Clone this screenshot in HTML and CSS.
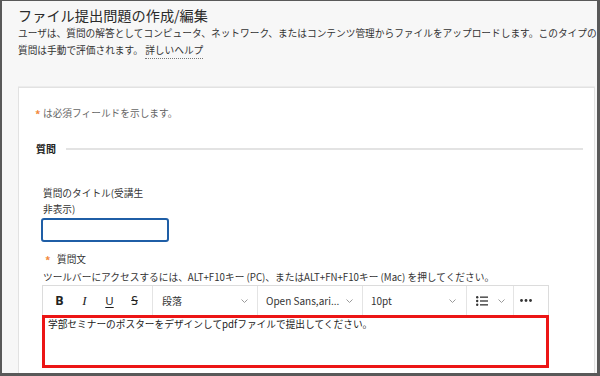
FILE: index.html
```html
<!DOCTYPE html>
<html lang="ja">
<head>
<meta charset="utf-8">
<link rel="stylesheet" href="styles.css">
</head>
<body>
<div class="frame">
  <header class="head">
    <h1 class="title">ファイル提出問題の作成/編集</h1>
    <p class="desc">ユーザは、質問の解答としてコンピュータ、ネットワーク、またはコンテンツ管理からファイルをアップロードします。このタイプの<br>質問は手動で評価されます。 <a class="help">詳しいヘルプ</a></p>
  </header>
  <section class="card">
    <p class="req"><span class="star">*</span>は必須フィールドを示します。</p>
    <div class="legend"><span class="legend-text">質問</span><span class="rule"></span></div>
    <div class="field">
      <label class="lbl">質問のタイトル(受講生<br>非表示)</label>
      <div class="input"></div>
    </div>
    <div class="qlabel"><span class="star star2">*</span>質問文</div>
    <p class="hint">ツールバーにアクセスするには、ALT+F10キー (PC)、またはALT+FN+F10キー (Mac) を押してください。</p>
    <div class="editor">
      <div class="toolbar">
        <div class="grp fmt">
          <span class="btn b-bold">B</span>
          <span class="btn b-ital">I</span>
          <span class="btn b-under">U</span>
          <span class="btn b-strike">S</span>
        </div>
        <div class="grp dd dd1"><span>段落</span><svg class="chev" width="7" height="4" viewBox="0 0 7 4"><polyline points="0.5,0.5 3.5,3.5 6.5,0.5"/></svg></div>
        <div class="grp dd dd2"><span>Open Sans,ari...</span><svg class="chev" width="7" height="4" viewBox="0 0 7 4"><polyline points="0.5,0.5 3.5,3.5 6.5,0.5"/></svg></div>
        <div class="grp dd dd3"><span>10pt</span><svg class="chev" width="7" height="4" viewBox="0 0 7 4"><polyline points="0.5,0.5 3.5,3.5 6.5,0.5"/></svg></div>
        <div class="grp list">
          <svg width="12" height="10" viewBox="0 0 12 10"><circle cx="1.2" cy="1.2" r="1.2"/><circle cx="1.2" cy="5" r="1.2"/><circle cx="1.2" cy="8.8" r="1.2"/><rect x="4" y="0.5" width="8" height="1.3"/><rect x="4" y="4.35" width="8" height="1.3"/><rect x="4" y="8.2" width="8" height="1.3"/></svg>
          <svg class="chev" width="7" height="4" viewBox="0 0 7 4"><polyline points="0.5,0.5 3.5,3.5 6.5,0.5"/></svg>
        </div>
        <div class="grp more">
          <svg width="12" height="3" viewBox="0 0 12 3"><circle cx="1.5" cy="1.5" r="1.4"/><circle cx="6" cy="1.5" r="1.4"/><circle cx="10.5" cy="1.5" r="1.4"/></svg>
        </div>
      </div>
      <div class="content">学部セミナーのポスターをデザインしてpdfファイルで提出してください。</div>
    </div>
  </section>
</div>
</body>
</html>
```
FILE: styles.css
```css
html, body {
  margin: 0;
  padding: 0;
}
body {
  width: 600px;
  height: 376px;
  overflow: hidden;
  font-family: "Noto Sans CJK JP", "Noto Sans", sans-serif;
  color: #333;
}
.frame {
  box-sizing: border-box;
  width: 600px;
  height: 376px;
  border-style: solid;
  border-color: #595959;
  border-width: 1px 3px 3px 2px;
  background: #f7f7f7;
  overflow: hidden;
  padding: 4px 2px 0 16px;
  display: flex;
  flex-direction: column;
}
.title {
  margin: 0;
  font-size: 14.2px;
  line-height: 20px;
  font-weight: 400;
  color: #2a2a2a;
  white-space: nowrap;
}
.desc {
  margin: 0;
  font-size: 9.7px;
  line-height: 17px;
  color: #333;
  white-space: nowrap;
}
.help {
  color: #333;
  text-decoration: none;
  border-bottom: 1px dotted #777;
  padding-bottom: 1px;
}
.card {
  margin-top: 28px;
  flex: 1;
  background: #fff;
  border: 1px solid #e2e2e2;
  border-bottom: none;
  box-shadow: 0 -1px 0 #ececec;
  padding: 17px 11px 0 16px;
  font-size: 9.7px;
}
.req {
  margin: 0;
  line-height: 16px;
  color: #666;
  display: flex;
  align-items: center;
}
.star {
  width: 8px;
  height: 16px;
  color: #f28a3e;
  font-size: 11px;
  font-weight: 700;
  line-height: 19px;
}
.legend {
  margin-top: 20px;
  display: flex;
  align-items: center;
  gap: 10px;
  padding-left: 1px;
  font-weight: 700;
  font-size: 10px;
  line-height: 16px;
  color: #222;
}
.rule {
  flex: 1;
  height: 2px;
  background: #e3e3e3;
}
.field {
  margin-top: 28px;
  padding-left: 6px;
}
.lbl {
  display: block;
  padding-left: 2px;
  line-height: 16px;
  color: #333;
  margin-bottom: 1px;
}
.input {
  width: 124px;
  height: 20px;
  border: 2px solid #1f5ea6;
  border-radius: 3px;
}
.qlabel {
  margin-top: 9px;
  padding-left: 10px;
  display: flex;
  align-items: center;
  line-height: 16px;
  color: #333;
}
.star2 {
  width: 12px;
}
.hint {
  margin: 2px 0 0;
  padding-left: 8px;
  line-height: 16px;
  color: #333;
  white-space: nowrap;
}
.editor {
  margin-left: 7px;
  width: 507px;
}
.toolbar {
  box-sizing: border-box;
  height: 30px;
  display: flex;
  border: 1px solid #dcdcdc;
  border-bottom: none;
  background: #fff;
}
.grp {
  box-sizing: border-box;
  height: 29px;
  display: flex;
  align-items: center;
  border-right: 1px solid #e4e4e4;
  font-size: 10px;
  color: #333;
}
.fmt {
  width: 110px;
  padding-left: 4px;
}
.btn {
  width: 25px;
  text-align: center;
  font-size: 12.5px;
  line-height: 14px;
  color: #222;
}
.b-bold {
  font-family: "Noto Sans", sans-serif;
  font-weight: 700;
}
.b-ital {
  font-family: "Liberation Serif", serif;
  font-style: italic;
  font-size: 13px;
}
.b-under {
  font-family: "Noto Sans", sans-serif;
  font-size: 11.5px;
  text-decoration: underline;
  text-underline-offset: 2px;
}
.b-strike {
  font-family: "Noto Sans", sans-serif;
  font-size: 12px;
  text-decoration: line-through;
}
.dd {
  justify-content: space-between;
  padding: 0 9px 0 8px;
}
.dd1 { width: 105px; padding-left: 9px; }
.dd2 { width: 105px; }
.dd3 { width: 104px; padding-right: 10px; }
.chev polyline {
  fill: none;
  stroke: #9a9a9a;
  stroke-width: 1;
}
.list {
  width: 47px;
  padding-left: 9px;
  gap: 10px;
  fill: #333;
}
.more {
  width: 34px;
  padding-left: 6px;
  border-right: none;
  fill: #333;
}
.content {
  box-sizing: border-box;
  height: 53px;
  border: 3px solid #ec1515;
  padding: 0 3px;
  line-height: 12px;
  font-size: 9.7px;
  color: #222;
  background: #fff;
}
```
